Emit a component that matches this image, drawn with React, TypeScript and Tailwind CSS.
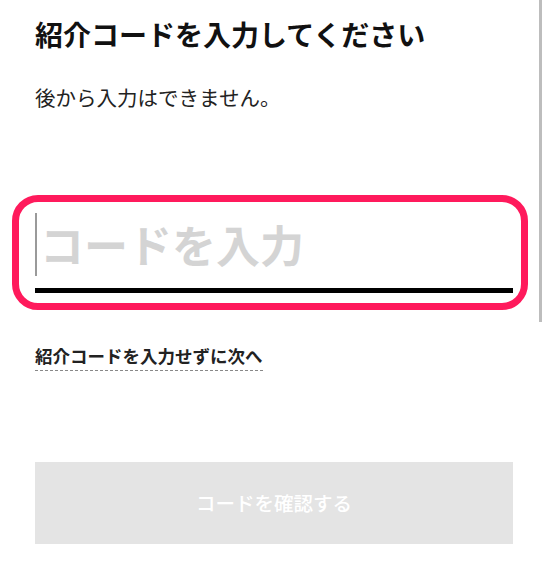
import React from 'react';

const App: React.FC = () => {
  return (
    <div
      className="relative w-[548px] h-[576px] overflow-hidden bg-white"
      style={{ fontFamily: '"Noto Sans CJK JP", "Noto Sans", sans-serif' }}
    >
      {/* Scrollbar */}
      <div className="absolute right-[6px] top-0 w-[3px] h-[322px] bg-[#bdbdbd]"></div>

      <div className="px-[35px] pt-[14px]">
        <h1 className="text-[28px] leading-[40px] font-bold text-[#111]">紹介コードを入力してください</h1>
        <p className="mt-[29px] text-[20.5px] leading-[28px] text-[#222]">後から入力はできません。</p>

        {/* Code input */}
        <div className="relative mt-[101px]">
          <div className="absolute left-[-23px] right-[-15px] top-[-17px] bottom-[-17px] border-[7px] border-[#ff1a5c] rounded-[26px] pointer-events-none"></div>
          <div className="flex items-center h-[64px]">
            <div className="w-[2px] h-[63px] bg-[#9a9a9a]"></div>
            <span className="ml-[3px] text-[44px] leading-[64px] font-bold text-[#d4d4d4]">コードを入力</span>
          </div>
          <div className="mt-[12px] h-[5px] bg-black"></div>
        </div>

        <div className="mt-[51px]">
          <a className="inline-block text-[17.5px] leading-[24px] font-bold text-[#222] border-b border-dashed border-[#888] pb-[2px]">
            紹介コードを入力せずに次へ
          </a>
        </div>

        <button
          disabled
          className="mt-[91px] w-full h-[82px] bg-[#e4e4e4] text-white text-[19.5px] font-medium flex items-center justify-center"
        >
          コードを確認する
        </button>
      </div>
    </div>
  );
};

export default App;
